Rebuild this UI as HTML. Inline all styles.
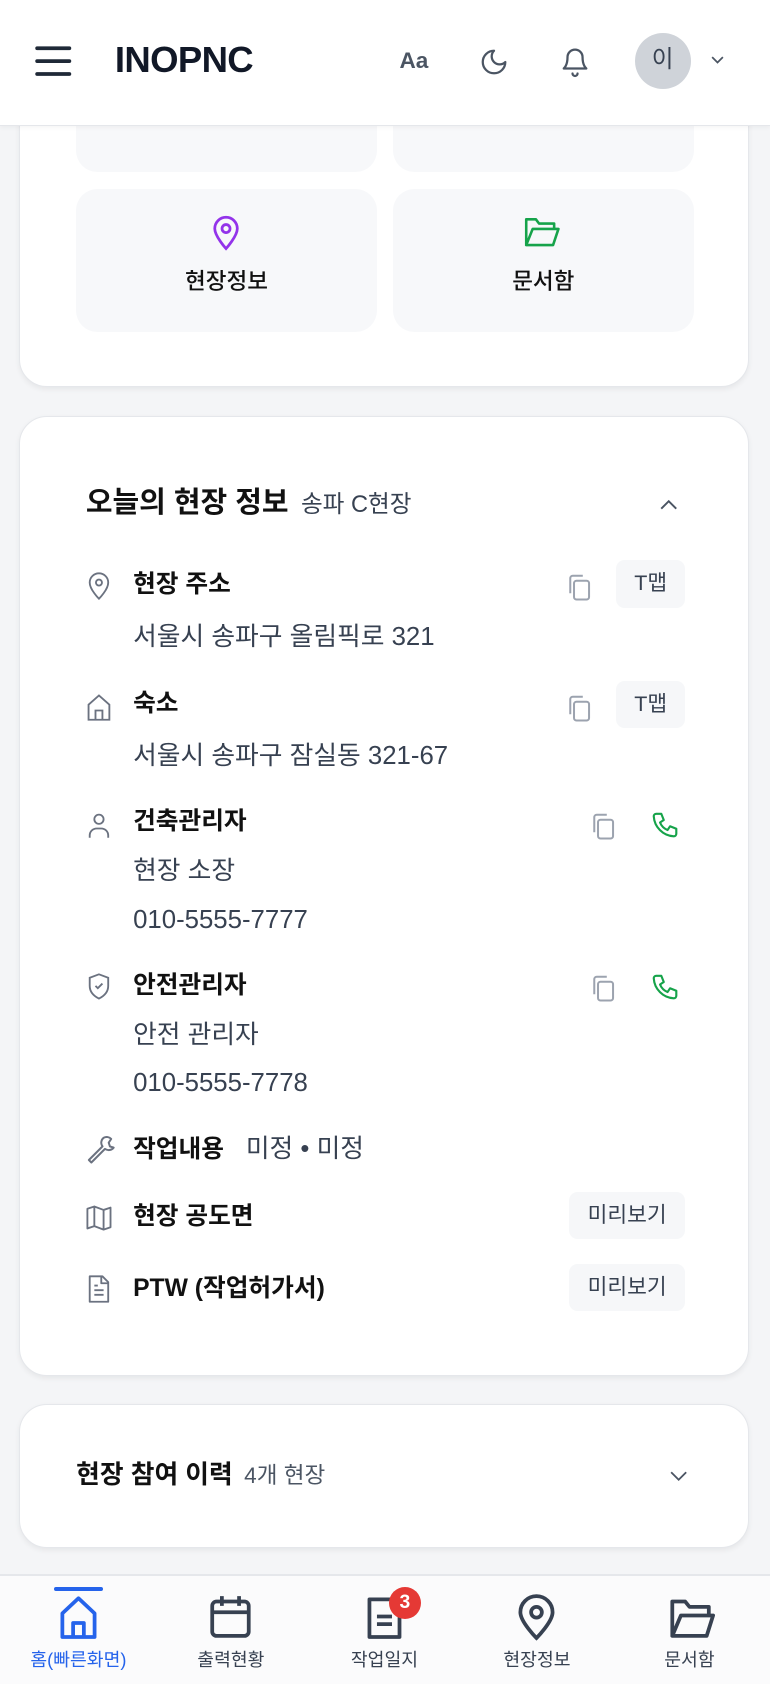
<!DOCTYPE html>
<html><head><meta charset="utf-8"><style>
html{zoom:1.07392}
*{box-sizing:border-box;margin:0;padding:0}
body{width:717px;height:1568px;background:#f4f5f7;font-family:"Liberation Sans","Noto Sans CJK KR",sans-serif;position:relative;overflow:hidden;color:#111827}
.hdr{position:absolute;top:0;left:0;width:717px;height:117px;background:#fff;border-bottom:1px solid #e5e7eb;box-shadow:0 2px 4px rgba(0,0,0,.04);z-index:5}
.card{position:absolute;left:18px;width:679px;background:#fff;border-radius:26px;border:1px solid #e5e7eb;box-shadow:0 2px 5px rgba(0,0,0,.06)}
.tile{position:absolute;background:#f7f8fa;border-radius:20px;width:280px;text-align:center}
.tile .lb{position:absolute;left:0;right:0;top:70px;font-size:21px;font-weight:500;color:#111}
.ic{position:absolute;left:60px}
.lab{position:absolute;left:105px;font-size:23px;line-height:30px;font-weight:700;color:#111;white-space:nowrap}
.val{position:absolute;left:105px;font-size:24px;line-height:30px;color:#374151;white-space:nowrap}
.btn{position:absolute;background:#f6f7f9;border-radius:8px;font-size:20px;color:#374151;text-align:center;line-height:44px;height:44px}
.nav{position:absolute;left:0;top:1466px;width:717px;height:102px;background:#fbfbfc;border-top:2px solid #e5e7eb}
.ni{position:absolute;top:0;width:140px;margin-left:-70px;text-align:center}
.ni .t{position:absolute;top:65px;left:0;right:0;font-size:17px;color:#374151}
.ni svg{position:absolute;top:16px;left:50px}
</style></head><body>
<div class="hdr">
<svg style="position:absolute;left:33px;top:42px" width="34" height="30" viewBox="0 0 34 30"><path d="M2 3h30M2 15h30M2 27h30" stroke="#1f2937" stroke-width="3.5" stroke-linecap="round"/></svg>
<div style="position:absolute;left:107px;top:36px;font-size:34px;font-weight:700;color:#111827;letter-spacing:-0.6px">INOPNC</div>
<div style="position:absolute;left:372px;top:45px;font-size:21px;font-weight:700;color:#4b5563">Aa</div>
<svg style="position:absolute;left:446px;top:44px" width="28" height="28" viewBox="0 0 24 24" fill="none" stroke="#4b5563" stroke-width="1.8" stroke-linecap="round" stroke-linejoin="round"><path d="M12 3a6 6 0 0 0 9 9 9 9 0 1 1-9-9z"/></svg>
<svg style="position:absolute;left:521px;top:42px" width="28" height="32" viewBox="0 0 24 26" fill="none" stroke="#4b5563" stroke-width="1.8" stroke-linecap="round" stroke-linejoin="round"><path d="M6 9a6 6 0 0 1 12 0c0 7 3 9 3 9H3s3-2 3-9M10 22a2 2 0 0 0 4 0"/></svg>
<div style="position:absolute;left:591px;top:31px;width:52px;height:52px;border-radius:50%;background:#cfd3d9;text-align:center;line-height:52px;font-size:22px;color:#374151">이</div>
<svg style="position:absolute;left:661px;top:51px" width="14" height="10" viewBox="0 0 14 10"><path d="M2 2l5 5 5-5" stroke="#4b5563" stroke-width="1.6" fill="none"/></svg>
</div>

<div class="card" style="top:40px;height:320px">
<div class="tile" style="left:52px;top:0;height:119px"></div>
<div class="tile" style="left:347px;top:0;height:119px"></div>
<div class="tile" style="left:52px;top:135px;height:133px">
<svg style="position:absolute;left:126px;top:22px" width="28" height="36" viewBox="0 0 24 30" fill="none" stroke="#9333ea" stroke-width="2.2"><path d="M12 28s-9-10-9-16a9 9 0 0 1 18 0c0 6-9 16-9 16z"/><circle cx="12" cy="12" r="3.2"/></svg>
<div class="lb">현장정보</div></div>
<div class="tile" style="left:347px;top:135px;height:133px">
<svg style="position:absolute;left:121px;top:24px" width="36" height="32" viewBox="0 0 36 32" fill="none" stroke="#16a34a" stroke-width="2.4" stroke-linejoin="round"><path d="M3 28V4h9l3 4h14v5M3 28h25l5-15H9z"/></svg>
<div class="lb">문서함</div></div>
</div>

<div class="card" style="top:387px;height:894px">
<div style="position:absolute;left:61px;top:63px;line-height:36px;font-size:27px;font-weight:700;color:#111;white-space:nowrap">오늘의 현장 정보 <span style="font-size:22px;font-weight:400;color:#374151;margin-left:4px">송파 C현장</span></div>
<svg style="position:absolute;left:594px;top:76px" width="20" height="12" viewBox="0 0 20 12"><path d="M3 10l7-7 7 7" stroke="#4b5563" stroke-width="1.8" fill="none"/></svg>

<svg class="ic" style="top:144px" width="26" height="28" viewBox="0 0 24 26" fill="none" stroke="#6b7280" stroke-width="1.6"><path d="M12 24s-8-8-8-14a8 8 0 0 1 16 0c0 6-8 14-8 14z"/><circle cx="12" cy="10" r="2.6"/></svg>
<div class="lab" style="top:142px">현장 주소</div>
<svg style="position:absolute;left:506px;top:145px" width="28" height="28" viewBox="0 0 24 24" fill="none" stroke="#9ca3af" stroke-width="1.6"><rect x="8" y="7" width="12" height="15" rx="2"/><path d="M5 17V5a2 2 0 0 1 2-2h8"/></svg>
<div class="btn" style="left:555px;top:134px;width:64px">T맵</div>
<div class="val" style="top:190px">서울시 송파구 올림픽로 321</div>

<svg class="ic" style="top:256px" width="26" height="28" viewBox="0 0 24 26" fill="none" stroke="#6b7280" stroke-width="1.6"><path d="M3 24V11l9-8 9 8v13zM9 24v-8h6v8"/></svg>
<div class="lab" style="top:253px">숙소</div>
<svg style="position:absolute;left:506px;top:257px" width="28" height="28" viewBox="0 0 24 24" fill="none" stroke="#9ca3af" stroke-width="1.6"><rect x="8" y="7" width="12" height="15" rx="2"/><path d="M5 17V5a2 2 0 0 1 2-2h8"/></svg>
<div class="btn" style="left:555px;top:246px;width:64px">T맵</div>
<div class="val" style="top:301px">서울시 송파구 잠실동 321-67</div>

<svg class="ic" style="top:366px" width="26" height="28" viewBox="0 0 24 26" fill="none" stroke="#6b7280" stroke-width="1.6"><circle cx="12" cy="8" r="4"/><path d="M4 24v-2a6 6 0 0 1 6-6h4a6 6 0 0 1 6 6v2"/></svg>
<div class="lab" style="top:363px">건축관리자</div>
<svg style="position:absolute;left:529px;top:367px" width="28" height="28" viewBox="0 0 24 24" fill="none" stroke="#9ca3af" stroke-width="1.6"><rect x="8" y="7" width="12" height="15" rx="2"/><path d="M5 17V5a2 2 0 0 1 2-2h8"/></svg>
<svg style="position:absolute;left:586px;top:366px" width="28" height="28" viewBox="0 0 24 24" fill="none" stroke="#16a34a" stroke-width="1.7" stroke-linejoin="round"><path d="M5 3h4l2 5-3 2a11 11 0 0 0 6 6l2-3 5 2v4a2 2 0 0 1-2 2A17 17 0 0 1 3 5a2 2 0 0 1 2-2z"/></svg>
<div class="val" style="top:408px">현장 소장</div>
<div class="val" style="top:454px">010-5555-7777</div>

<svg class="ic" style="top:517px" width="26" height="28" viewBox="0 0 24 26" fill="none" stroke="#6b7280" stroke-width="1.6"><path d="M12 2l8 3v7c0 6-4 9-8 11-4-2-8-5-8-11V5z"/><path d="M9 12l2 2 4-4"/></svg>
<div class="lab" style="top:515px">안전관리자</div>
<svg style="position:absolute;left:529px;top:518px" width="28" height="28" viewBox="0 0 24 24" fill="none" stroke="#9ca3af" stroke-width="1.6"><rect x="8" y="7" width="12" height="15" rx="2"/><path d="M5 17V5a2 2 0 0 1 2-2h8"/></svg>
<svg style="position:absolute;left:586px;top:517px" width="28" height="28" viewBox="0 0 24 24" fill="none" stroke="#16a34a" stroke-width="1.7" stroke-linejoin="round"><path d="M5 3h4l2 5-3 2a11 11 0 0 0 6 6l2-3 5 2v4a2 2 0 0 1-2 2A17 17 0 0 1 3 5a2 2 0 0 1 2-2z"/></svg>
<div class="val" style="top:561px">안전 관리자</div>
<div class="val" style="top:606px">010-5555-7778</div>

<svg class="ic" style="top:668px" width="28" height="30" viewBox="0 0 24 26" fill="none" stroke="#6b7280" stroke-width="1.6" stroke-linejoin="round"><path d="M15 3a5 5 0 0 0-1 7L3 21l2 2 11-11a5 5 0 0 0 7-1l-3-1-1-3 2-3a5 5 0 0 0-6-1z"/></svg>
<div class="lab" style="top:667px">작업내용 <span style="font-weight:400;font-size:24px;color:#374151;margin-left:14px">미정 • 미정</span></div>

<svg class="ic" style="top:732px" width="26" height="28" viewBox="0 0 24 26" fill="none" stroke="#6b7280" stroke-width="1.6" stroke-linejoin="round"><path d="M2 5l6-2 8 3 6-2v17l-6 2-8-3-6 2zM8 3v17M16 6v17"/></svg>
<div class="lab" style="top:730px">현장 공도면</div>
<div class="btn" style="left:511px;top:722px;width:108px">미리보기</div>

<svg class="ic" style="top:798px" width="26" height="28" viewBox="0 0 24 26" fill="none" stroke="#6b7280" stroke-width="1.6" stroke-linejoin="round"><path d="M4 2h11l5 5v17H4zM14 2v6h6M8 14h8M8 18h8M8 10h3"/></svg>
<div class="lab" style="top:797px">PTW (작업허가서)</div>
<div class="btn" style="left:511px;top:789px;width:108px">미리보기</div>
</div>

<div class="card" style="top:1307px;height:134px">
<div style="position:absolute;left:52px;top:49px;line-height:34px;font-size:24px;font-weight:700;color:#111;white-space:nowrap">현장 참여 이력 <span style="font-size:21px;font-weight:400;color:#4b5563;margin-left:4px">4개 현장</span></div>
<svg style="position:absolute;left:604px;top:60px" width="18" height="12" viewBox="0 0 18 12"><path d="M2 3l7 7 7-7" stroke="#4b5563" stroke-width="1.7" fill="none"/></svg>
</div>

<div class="nav">
<div class="ni" style="left:73px">
<div style="position:absolute;left:47px;top:10px;width:46px;height:4px;background:#2563eb;border-radius:2px"></div>
<svg width="40" height="44" viewBox="0 0 40 44" fill="none" stroke="#2563eb" stroke-width="3.5" stroke-linejoin="round"><path d="M5 40V18L20 4l15 14v22zM15 40V27h10v13"/></svg>
<div class="t" style="color:#2563eb">홈(빠른화면)</div></div>
<div class="ni" style="left:215px">
<svg width="40" height="44" viewBox="0 0 40 44" fill="none" stroke="#374151" stroke-width="3.5" stroke-linejoin="round"><rect x="3" y="7" width="34" height="32" rx="4"/><path d="M12 2v9M28 2v9M3 17h34"/></svg>
<div class="t">출력현황</div></div>
<div class="ni" style="left:358px">
<svg width="40" height="44" viewBox="0 0 40 44" fill="none" stroke="#374151" stroke-width="3.5" stroke-linejoin="round"><path d="M6 5h20l8 8v27H6zM13 21h14M13 28h14"/></svg>
<div style="position:absolute;left:74px;top:10px;width:30px;height:30px;border-radius:50%;background:#e53935;color:#fff;font-weight:700;font-size:18px;line-height:30px;text-align:center">3</div>
<div class="t">작업일지</div></div>
<div class="ni" style="left:500px">
<svg width="40" height="44" viewBox="0 0 40 44" fill="none" stroke="#374151" stroke-width="3.5"><path d="M20 41S5 26 5 17a15 15 0 0 1 30 0c0 9-15 24-15 24z"/><circle cx="20" cy="17" r="5"/></svg>
<div class="t">현장정보</div></div>
<div class="ni" style="left:642px">
<svg width="44" height="44" viewBox="0 0 44 44" fill="none" stroke="#374151" stroke-width="3.5" stroke-linejoin="round"><path d="M4 39V7h12l4 5h18v8M4 39h32l6-19H12z"/></svg>
<div class="t">문서함</div></div>
</div>
</body></html>
